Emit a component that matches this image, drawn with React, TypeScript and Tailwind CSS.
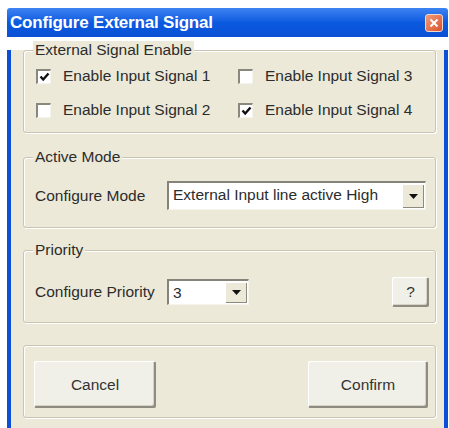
import { ReactNode } from "react";

const font = { fontFamily: '"Liberation Sans", Arial, sans-serif' };

function GroupBox({ title, className, children }: { title?: string; className: string; children?: ReactNode }) {
  return (
    <div className={`relative rounded-[3px] border border-[#c8c5b4] shadow-[inset_1px_1px_0_#fff,1px_1px_0_#fff] ${className}`}>
      {title && <span className="absolute -top-[10px] left-[9px] bg-[#ece9d8] px-[2px] leading-[18px]">{title}</span>}
      {children}
    </div>
  );
}

function CheckBox({ label, checked }: { label: string; checked?: boolean }) {
  return (
    <div className="flex h-[20px] items-center gap-[12px]">
      <span className="flex h-[15px] w-[15px] items-center justify-center border-t-[2px] border-l-[2px] border-t-[#8a887c] border-l-[#8a887c] border-b border-r border-b-[#f4f3ee] border-r-[#f4f3ee] bg-white">
        {checked && (
          <svg width="11" height="10" viewBox="0 0 11 10">
            <path d="M1.5 4.5 L4.2 7.5 L9.5 1.5" fill="none" stroke="#111" strokeWidth="2.4" />
          </svg>
        )}
      </span>
      <span>{label}</span>
    </div>
  );
}

function Select({ value, className }: { value: string; className: string }) {
  return (
    <div className={`flex items-stretch border-t-[2px] border-l-[2px] border-t-[#86847a] border-l-[#86847a] border-b border-r border-b-[#f5f4ee] border-r-[#f5f4ee] bg-white ${className}`}>
      <span className="flex-1 pl-[4px] leading-[24px]">{value}</span>
      <span className="m-[1px] flex w-[22px] items-center justify-center bg-[#ece9d8] shadow-[inset_1px_1px_0_#fff,inset_-1px_-1px_0_#8d8b80]">
        <svg width="9" height="5" viewBox="0 0 9 5">
          <path d="M0 0 H9 L4.5 5 Z" fill="#111" />
        </svg>
      </span>
    </div>
  );
}

function Button({ label, className }: { label: string; className: string }) {
  return (
    <button className={`rounded-[2px] bg-[#f1f0e8] text-[#333] shadow-[inset_1px_1px_0_#fff,inset_-2px_-2px_0_#8e8c80,inset_-3px_-3px_0_#d6d3c4] ${className}`}>
      {label}
    </button>
  );
}

export default function App() {
  return (
    <div className="h-[428px] w-[449px] bg-white pt-[8px] pl-[7px] text-[15.5px] text-[#2c2c2c]" style={font}>
      <div className="w-[441px]">
        <div className="flex h-[29px] items-center justify-between rounded-t-[3px] bg-gradient-to-b from-[#3d83f2] via-[#0a5ae0] to-[#0a50d4] pl-[3px] pr-[5px]">
          <span className="text-[17px] font-bold tracking-[-0.2px] text-white">Configure External Signal</span>
          <span className="flex h-[18px] w-[18px] items-center justify-center rounded-[3px] border border-[#f0d8cc] bg-gradient-to-br from-[#f19a78] to-[#d9502c]">
            <svg width="10" height="10" viewBox="0 0 10 10">
              <path d="M1.5 1.5 L8.5 8.5 M8.5 1.5 L1.5 8.5" stroke="#fff" strokeWidth="2" />
            </svg>
          </span>
        </div>
        <div className="h-[390px] border-x-[4px] border-b-[4px] border-[#0b4fd6] bg-[#ece9d8] pl-[12px] pr-[8px]">
          <GroupBox title="External Signal Enable" className="mt-[13px] h-[83px]">
            <div className="grid grid-cols-[202px_1fr] gap-y-[14px] pt-[15px] pl-[12px]">
              <CheckBox label="Enable Input Signal 1" checked />
              <CheckBox label="Enable Input Signal 3" />
              <CheckBox label="Enable Input Signal 2" />
              <CheckBox label="Enable Input Signal 4" checked />
            </div>
          </GroupBox>
          <GroupBox title="Active Mode" className="mt-[24px] h-[71px]">
            <div className="flex items-center pt-[23px] pl-[11px]">
              <span className="w-[132px]">Configure Mode</span>
              <Select value="External Input line active High" className="h-[29px] w-[259px]" />
            </div>
          </GroupBox>
          <GroupBox title="Priority" className="mt-[22px] h-[73px]">
            <div className="flex items-center pt-[26px] pl-[11px] pr-[6px]">
              <span className="w-[132px]">Configure Priority</span>
              <Select value="3" className="h-[26px] w-[82px]" />
              <Button label="?" className="ml-auto h-[30px] w-[37px]" />
            </div>
          </GroupBox>
          <GroupBox className="mt-[22px] h-[73px]">
            <div className="flex items-start justify-between pt-[15px] pl-[10px] pr-[7px]">
              <Button label="Cancel" className="h-[47px] w-[122px]" />
              <Button label="Confirm" className="h-[47px] w-[120px]" />
            </div>
          </GroupBox>
        </div>
      </div>
    </div>
  );
}
